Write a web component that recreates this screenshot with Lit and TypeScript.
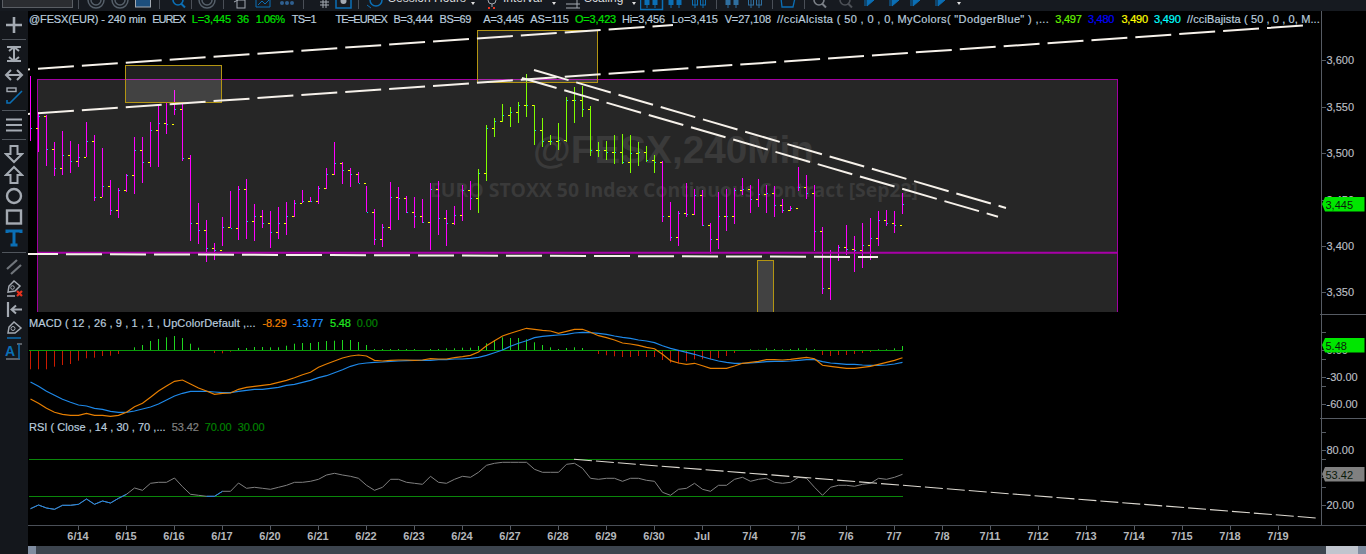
import { LitElement, html, css, svg } from "lit";
import { customElement } from "lit/decorators.js";

// [high, low, close] for each bar, 8px apart
const BARS: number[][] = [
  [76,141,128],[112,152,116],[115,166,149],[142,176,168],[131,175,155],[141,173,161],[144,167,157],[122,157,141],[135,201,197],[148,197,186],
  [180,215,210],[188,218,190],[174,192,175],[137,194,150],[137,183,162],[122,167,130],[106,167,123],[102,134,124],[90,115,109],[104,161,158],
  [155,241,223],[203,244,230],[220,262,248],[243,260,250],[217,246,227],[191,228,228],[186,240,189],[179,239,221],[204,241,216],[210,228,223],
  [211,248,232],[207,239,223],[202,235,216],[200,217,203],[190,203,201],[197,202,201],[186,204,188],[168,189,174],[142,175,163],[162,184,170],
  [168,187,174],[172,183,183],[186,212,212],[209,245,239],[224,247,227],[182,230,197],[187,220,198],[196,213,212],[197,228,216],[199,223,222],
  [183,250,189],[181,235,218],[210,246,223],[206,225,215],[185,221,190],[181,210,198],[169,213,173],[125,181,128],[118,137,121],[104,122,115],
  [107,127,112],[102,123,105],[74,117,105],[105,145,130],[118,147,141],[135,145,141],[123,150,140],[97,142,100],[87,123,100],[86,117,109],
  [106,156,150],[142,157,150],[141,160,152],[135,164,152],[134,164,162],[135,173,153],[142,166,152],[146,162,160],[155,173,162],[161,222,216],
  [202,241,237],[211,246,213],[183,217,214],[189,215,195],[190,226,225],[223,254,239],[192,249,216],[189,231,216],[188,224,190],[178,195,189],
  [185,213,199],[179,207,194],[185,213,193],[186,217,205],[199,213,210],[206,211,208],[167,191,187],[175,199,193],[185,251,231],[227,294,288],
  [250,300,252],[245,261,247],[225,255,249],[236,272,250],[223,268,245],[218,260,238],[211,246,220],[210,226,223],[211,233,225],[193,214,204],
];
const isGreen = (i: number) => i >= 56 && i <= 78;
const bx = (i: number) => 30 + 8 * i;

const path = (filter: (i: number) => boolean) =>
  BARS.map((b, i) => (filter(i) ? `M${bx(i) + 0.5} ${b[0]}V${b[1]}` : "")).join("");
const closeTicks = BARS.map((b, i) => `M${bx(i) + 1} ${b[2] + 0.5}h1`).join("");
const openTicks = BARS.map((b, i) => (i ? `M${bx(i) - 2} ${BARS[i - 1][2] + 0.5}h2` : "")).join("");

const HIST = [568,568,568,560,555,552,542,535,533,528,527,522,513,502,495,483,477,472,468,474,491,503,512,519,520,515,504,504,501,501,502,502,497,491,489,489,486,483,482,480,480,486,495,507,507,507,507,507,507,510,507,507,505,505,
  503,503,498,490,480,472,474,474,478,487,495,502,507,504,502,504,512,522,526,529,531,531,528,531,531,540,548,550,544,538,538,538,534,528,519,511,508,509,505,507,508,507,505,505,507,525,528,525,525,522,519,516,508,508,505,498];
const ORANGE = [
  ...[87,100,115,127,133,136,136,130,136,136,139,136,127,110,100,82,63,48,34,30,42,54,63,73,70,69,58,52,49,46,43,37,31,23,14,7].map((v) => 370 + v / 3),
  ...[562,552,543,534,528,525,528,541,543,541,540,540,541,540,536,537,537,533,
    530,526,516,497,482,468,460,452,445,448,451,453,460,454,448,448,457,467,473,480,489,492,496,502,506,523,542,549,553,550,557,565,565,565,558,550,547,544,539,539,540,538,535,532,536,556,559,562,565,565,562,559,553,547,541,533].map((v) => 180 + v / 3),
];
const BLUE = [
  ...[36,49,64,76,88,97,105,108,115,118,124,127,127,123,117,111,102,90,78,70,64,64,64,66,68,68,64,61,58,58,55,52,46,43,37,31,23,17,8,-1].map((v) => 370 + v / 3),
  ...[559,552,549,547,546,544,543,542,541,541,541,539,539,537,
    537,535,532,526,518,510,499,490,482,473,469,467,465,463,459,457,458,460,463,468,472,475,480,483,488,497,505,511,517,523,530,537,543,547,550,550,549,547,545,544,544,543,541,539,539,545,549,551,553,553,555,556,556,555,552,547].map((v) => 180 + v / 3),
];
const RSI = [416,405,414,418,406,406,403,387,403,393,399,385,373,354,361,340,337,337,324,350,373,376,379,379,364,364,339,355,352,355,358,352,346,337,337,334,328,315,310,315,319,325,346,361,352,328,328,337,340,343,319,337,340,328,
  319,322,307,286,280,277,277,277,277,298,307,307,307,283,280,295,325,328,325,325,334,325,325,331,334,367,376,358,355,340,358,364,346,346,328,322,334,328,325,337,340,337,322,325,352,376,352,346,346,349,343,340,325,328,322,313].map((v) => 370 + v / 3);

const pts = (a: number[], from = 0, to = a.length - 1) =>
  a.slice(from, to + 1).map((y, i) => `${bx(i + from) + 0.5},${y.toFixed(1)}`).join(" ");

const dash = (x1: number, y1: number, x2: number, y2: number, off: number) =>
  svg`<line class="trend" x1=${x1} y1=${y1} x2=${x2} y2=${y2} stroke-dashoffset=${off}></line>`;

const overlayRect = (x1: number, y1: number, x2: number, y2: number) =>
  svg`<rect class="box" x=${x1 + 0.5} y=${y1 + 0.5} width=${x2 - x1} height=${y2 - y1}></rect>`;

const axisLabel = (y: number, t: string) => svg`
  <path class="tick" d="M1322 ${y + 0.5}h4"></path>
  <text class="axis" x="1326.5" y=${y + 4}>${t}</text>`;

const badge = (y: number, t: string, fill: string) => svg`
  <polygon points="1322,${y + 7} 1325,${y} 1364.5,${y} 1364.5,${y + 14.5} 1325,${y + 14.5}" fill=${fill}></polygon>
  <text class="badge" x="1325.500" y=${y + 11.5}>${t}</text>`;

// x = left edge of the text, e = right edge of the text in the reference
type Item = { t: string; c?: string; x: number; e: number };
const MAIN_LEGEND: Item[] = [
  { t: "@FESX(EUR) - 240 min", x: 29, e: 146 },
  { t: "EUREX", x: 152.3, e: 185 },
  { t: "L=3,445", c: "#00e000", x: 191.7, e: 231 },
  { t: "36", c: "#00e000", x: 237, e: 249 },
  { t: "1.06%", c: "#00e000", x: 255.7, e: 284.7 },
  { t: "TS=1", x: 291.7, e: 316 },
  { t: "TE=EUREX", x: 335.5, e: 387 },
  { t: "B=3,444", x: 393.5, e: 433 },
  { t: "BS=69", x: 439.5, e: 471 },
  { t: "A=3,445", x: 483.3, e: 524 },
  { t: "AS=115", x: 530.3, e: 569 },
  { t: "O=3,423", c: "#00e000", x: 575, e: 616 },
  { t: "Hi=3,456", x: 622, e: 665 },
  { t: "Lo=3,415", x: 671.7, e: 718 },
  { t: "V=27,108", x: 724.7, e: 771 },
  { t: '//cciAlcista ( 50 , 0 , 0, MyColors( "DodgerBlue" ) ,...', x: 777, e: 1049.3 },
  { t: "3,497", c: "#66f000", x: 1055.3, e: 1081.7 },
  { t: "3,480", c: "#0000ff", x: 1088, e: 1114.3 },
  { t: "3,490", c: "#ffff00", x: 1121.5, e: 1148 },
  { t: "3,490", c: "#00ffff", x: 1154, e: 1180.7 },
  { t: "//cciBajista ( 50 , 0 , 0, M...", x: 1187, e: 1320 },
];
const MACD_LEGEND: Item[] = [
  { t: "MACD ( 12 , 26 , 9 , 1 , 1 , UpColorDefault ,...", x: 29.3, e: 256 },
  { t: "-8.29", c: "#f08000", x: 262.7, e: 287 },
  { t: "-13.77", c: "#1e90ff", x: 293, e: 323.7 },
  { t: "5.48", c: "#20e820", x: 330.3, e: 351 },
  { t: "0.00", c: "#008000", x: 357, e: 378 },
];
const RSI_LEGEND: Item[] = [
  { t: "RSI ( Close , 14 , 30 , 70 ,...", x: 29.3, e: 166 },
  { t: "53.42", c: "#808080", x: 172, e: 199 },
  { t: "70.00", c: "#008000", x: 205, e: 231.7 },
  { t: "30.00", c: "#008000", x: 238, e: 264.7 },
];

const measure = document.createElement("canvas").getContext("2d")!;
measure.font = `11px "Liberation Sans"`;

const legend = (items: Item[]) => html`<div class="legend">
  ${items.map((it, i) => {
    const next = i + 1 < items.length ? items[i + 1].x : it.e + 4;
    const ls = (it.e - it.x - measure.measureText(it.t).width) / it.t.length;
    return html`<span style="width:${(next - it.x).toFixed(1)}px;letter-spacing:${ls.toFixed(3)}px;${it.c ? `color:${it.c}` : ""}">${it.t}</span>`;
  })}
</div>`;

const DATES = ["6/14","6/15","6/16","6/17","6/20","6/21","6/22","6/23","6/24","6/27","6/28","6/29","6/30","Jul","7/4","7/5","7/6","7/7","7/8","7/11","7/12","7/13","7/14","7/15","7/18","7/19"];

const G = "#a4aab2";
const B = "#0b6fb5";
const ico = (w: number, h: number, body: unknown) =>
  html`<svg width=${w} height=${h} viewBox="0 0 ${w} ${h}" fill="none">${body}</svg>`;

const TOOLS: (unknown | null)[] = [
  svg`<path d="M10 2v16M2 10h16" stroke=${G} stroke-width="2.600"></path>`,
  null,
  svg`<path d="M3 3h14M3 17h14M10 4v12" stroke=${G} stroke-width="2"></path><path d="M5 7l5-4 5 4M5 13l5 4 5-4" stroke=${G} stroke-width="2"></path>`,
  svg`<path d="M3 10h14M7 5l-5 5 5 5M13 5l5 5-5 5" stroke=${G} stroke-width="2"></path>`,
  svg`<path d="M3 14l0 3 3 0L18 5" stroke=${B} stroke-width="1.600"></path><rect x="3" y="2" width="9" height="3.500" stroke=${G} stroke-width="1.400"></rect>`,
  null,
  svg`<path d="M2 4.500h16M2 10h16M2 15.500h16" stroke=${G} stroke-width="2"></path>`,
  null,
  svg`<path d="M6.500 2h7v8h4.500L10 18 2 10h4.500z" stroke=${G} stroke-width="2"></path>`,
  svg`<path d="M6.500 18h7v-8h4.500L10 2 2 10h4.500z" stroke=${G} stroke-width="2"></path>`,
  svg`<circle cx="10" cy="10" r="7" stroke=${G} stroke-width="2.400"></circle>`,
  svg`<rect x="3" y="3.500" width="14" height="13" stroke=${G} stroke-width="2.400"></rect>`,
  svg`<path d="M3 5V3h14v2M10 3v14M6.500 17h7" stroke=${B} stroke-width="3"></path>`,
  null,
  svg`<path d="M3 12L13 3M7 17L17 8" stroke="#70757b" stroke-width="2.200"></path>`,
  svg`<path d="M4 14l1-6 5-5 6 5-5 5zM3 18h8" stroke=${G} stroke-width="1.500"></path><circle cx="8.500" cy="9.500" r="1.800" stroke=${G}></circle><path d="M13 13l5 5M18 13l-5 5" stroke="#e8321e" stroke-width="2.200"></path>`,
  svg`<path d="M4 3v15" stroke=${G} stroke-width="2.200"></path><path d="M8 10.500h10M12 6.500l-4.500 4 4.500 4" stroke=${G} stroke-width="2"></path>`,
  svg`<path d="M4 13l1-6 5-5 7 6-6 5z" stroke=${G} stroke-width="1.500"></path><circle cx="9" cy="8.500" r="2" stroke=${G}></circle><path d="M3 18h14" stroke=${B} stroke-width="1.500"></path>`,
  svg`<text class="tool-a" x="1" y="15" fill=${B}>A</text><path d="M2 18h14M13 3h5" stroke=${G} stroke-width="1.200"></path><path d="M15 3v15" stroke=${B} stroke-width="1.500"></path>`,
];

const rings = svg`<circle cx="9" cy="0" r="8" stroke="#56606a" stroke-width="1.500"></circle><circle cx="9" cy="0" r="5" stroke="#56606a" stroke-width="1.500"></circle>`;
const sep = html`<i class="bar-sep"></i>`;
const caret = html`<span class="caret"></span>`;
const word = (t: string) => html`<span class="word">${t}</span>`;
const candles = (c: string) => svg`<path d="M5 0v8M13 0v8" stroke=${c}></path><rect x="2.500" y="0" width="5" height="5" fill=${c}></rect><rect x="10.500" y="0" width="5" height="5" fill=${c}></rect>`;
const hollow = (c: string) => svg`<path d="M5 0v8M13 0v8" stroke=${c}></path><rect x="2.500" y="-1" width="5" height="6" stroke=${c}></rect><rect x="10.500" y="-1" width="5" height="6" stroke=${c}></rect>`;
const lens = (c: string) => svg`<circle cx="7" cy="0" r="5" stroke=${c} stroke-width="1.600"></circle><path d="M10 3.500l4 4" stroke=${c} stroke-width="2"></path>`;
const skip = (c: string) => svg`<path d="M2 0v6M4 0l7 0-7 6z" fill=${c} stroke=${c}></path>`;
const draw = (body: unknown) => html`<svg width="30" height="11" viewBox="0 0 30 11" fill="none">${body}</svg>`;

// toolbar: [left edge, content]; each slot's width runs up to the next one
const TOP: [number, unknown][] = [
  [2, html`<div class="input"></div>`],
  [78, sep],
  [87, draw(rings)],
  [111, draw(rings)],
  [135, draw(svg`<rect x="0.500" y="-3" width="15" height="10" fill="#1d4f7d" stroke=${G}></rect>`)],
  [159, sep],
  [171, draw(lens(B))],
  [191, sep],
  [198, draw(rings)],
  [223, sep],
  [233, draw(svg`<rect x="4" y="0" width="8" height="8" stroke=${G}></rect><path d="M1 2l4-2" stroke=${G}></path>`)],
  [255, draw(svg`<path d="M1 7V0M15 7V0M1 7h14M3 5l4-4 3 3 4-4" stroke=${B}></path>`)],
  [279, draw(svg`<circle cx="3" cy="3" r="2" fill="#2f5f8f"></circle><circle cx="8" cy="3" r="2" fill="#2f5f8f"></circle><circle cx="13" cy="3" r="2" fill="#2f5f8f"></circle>`)],
  [303, sep],
  [314, draw(svg`<path d="M9 0v8M12 0v8M6 2h9M6 5h9" stroke=${G}></path>`)],
  [335, draw(svg`<rect x="1" y="-3" width="15" height="11" stroke=${B} stroke-width="1.500"></rect><circle cx="8.500" cy="1" r="3" fill=${G}></circle>`)],
  [358, sep],
  [366, draw(svg`<circle cx="10" cy="0" r="6" stroke=${B} stroke-width="1.500"></circle><path d="M1 5l4 3" stroke=${B}></path>`)],
  [388, word("Session Hours")],
  [471, caret],
  [486, draw(svg`<circle cx="6" cy="0" r="4" stroke=${G}></circle><path d="M2 8h2M7 8h2" stroke="#e8321e" stroke-width="2"></path><path d="M6 4v3" stroke=${G}></path>`)],
  [503, word("Interval")],
  [552, caret],
  [565, draw(svg`<path d="M1 4h14M1 8h14M12 0v8" stroke=${G}></path>`)],
  [584, word("Scaling")],
  [632, caret],
  [640, draw(svg`<rect x="0.500" y="-2" width="22" height="11.500" stroke=${B} stroke-width="1.500"></rect><g transform="translate(2 0)">${candles(B)}</g>`)],
  [666, draw(candles(B))],
  [690, draw(hollow(B))],
  [716, sep],
  [723, draw(candles("#2f6f9f"))],
  [746, draw(hollow("#2f6f9f"))],
  [772, sep],
  [779, draw(svg`<path d="M2 -2h14l-2 9H3z" stroke=${B} stroke-width="1.300"></path>`)],
  [804, sep],
  [812, draw(lens("#7b8087"))],
  [838, draw(lens("#4c5056"))],
  [863, draw(skip(B))],
  [888, draw(skip(B))],
  [909, draw(skip(B))],
  [934, draw(skip(B))],
  [957, caret],
];

@customElement("app-root")
export class AppRoot extends LitElement {
  static styles = css`
    :host {
      display: grid;
      grid-template-columns: 28px 1fr;
      grid-template-rows: 11px 543px;
      width: 1366px;
      height: 554px;
      overflow: hidden;
      background: #000;
      font-family: "Liberation Sans", Arial, sans-serif;
    }
    .top {
      grid-column: 1 / 3;
      display: flex;
      align-items: flex-start;
      padding-left: 2px;
      background: #161a20;
      overflow: hidden;
      height: 11px;
    }
    .slot {
      display: block;
      flex: none;
      height: 11px;
      overflow: hidden;
    }
    .slot svg, .tool svg { display: block; }
    .input {
      width: 71px;
      height: 8px;
      background: #2b2d31;
      border: 1px solid #5a5e64;
      border-top: 0;
      box-sizing: border-box;
    }
    .bar-sep {
      display: block;
      width: 1px;
      height: 9px;
      background: #4a4f57;
    }
    .word {
      display: block;
      margin-top: -9px;
      font-size: 12px;
      line-height: 14px;
      color: #d7d9dc;
      white-space: nowrap;
    }
    .caret {
      display: block;
      width: 0;
      height: 0;
      margin-top: 2px;
      border-left: 2.500px solid transparent;
      border-right: 2.500px solid transparent;
      border-top: 3px solid #e0e0e0;
    }
    .side {
      background: #14171c;
      display: flex;
      flex-direction: column;
      align-items: center;
      padding-top: 3px;
    }
    .tool {
      height: 21px;
      width: 20px;
      flex: none;
      display: flex;
      align-items: center;
      justify-content: center;
    }
    .tool-a { font: bold 14px "Liberation Sans", Arial, sans-serif; }
    .side-sep {
      height: 1px;
      width: 24px;
      flex: none;
      margin: 3.500px 0;
      background: #50555c;
    }
    .charts {
      display: flex;
      flex-direction: column;
      min-width: 0;
      background: #000;
    }
    .pane {
      position: relative;
      flex: none;
    }
    .pane-main { height: 304px; }
    .pane-macd { height: 104px; }
    .pane-rsi { height: 106px; }
    .pane svg { display: block; }
    .legend {
      position: absolute;
      left: 1px;
      top: 1px;
      display: flex;
      font-size: 11px;
      line-height: 14px;
      color: #b9cbdc;
      -webkit-text-stroke: 0.2px currentColor;
      white-space: pre;
    }
    .legend span { flex: none; }
    .trend {
      stroke: #f6f1ea;
      stroke-width: 2;
      stroke-dasharray: 36 8;
    }
    .trend.thin {
      stroke: #dcd8d0;
      stroke-width: 1.100;
      stroke-dasharray: 18 4;
    }
    .box {
      fill: rgba(255, 255, 255, 0.13);
      stroke: #b39512;
      stroke-width: 1;
    }
    .tick { stroke: #565b63; stroke-width: 1; fill: none; }
    .axis {
      font-size: 11px;
      fill: #bcbfc4;
      stroke: #bcbfc4;
      stroke-width: 0.15;
      font-family: "Liberation Sans", Arial, sans-serif;
    }
    .badge {
      font-size: 11px;
      fill: #0a1a0a;
      font-family: "Liberation Sans", Arial, sans-serif;
    }
    .wm1 {
      font: bold 38px "Liberation Sans", Arial, sans-serif;
      fill: #3a3a3a;
    }
    .wm2 {
      font: bold 20px "Open Sans", "Liberation Sans", sans-serif;
      fill: #3a3a3a;
    }
    .time {
      flex: none;
      height: 21px;
      box-sizing: border-box;
      border-top: 1px solid #4a4f57;
      display: flex;
      padding-left: 26px;
    }
    .date {
      width: 48px;
      flex: none;
      position: relative;
      text-align: center;
      font-size: 11px;
      font-weight: 700;
      line-height: 14px;
      padding-top: 3px;
      color: #b4b7bb;
    }
    .date::before {
      content: "";
      position: absolute;
      left: 24px;
      top: 0;
      width: 1px;
      height: 4px;
      background: #565b63;
    }
    .scroll {
      flex: none;
      height: 8px;
      display: flex;
      background: #3c444e;
    }
    .scroll .end { width: 8px; flex: none; background: #7f8ca0; }
    .scroll .fill { flex: 1; }
    .scroll .thumb { width: 32px; flex: none; background: #c0c5ce; }
  `;

  render() {
    return html`
      <div class="top">
        ${TOP.map(([x, body], i) => {
          const next = i + 1 < TOP.length ? TOP[i + 1][0] : x + 6;
          return html`<span class="slot" style="width:${next - x}px">${body}</span>`;
        })}
      </div>

      <div class="side">
        ${TOOLS.map((t) =>
          t === null
            ? html`<i class="side-sep"></i>`
            : html`<div class="tool">${ico(20, 20, t)}</div>`,
        )}
      </div>

      <div class="charts">
        <div class="pane pane-main">
          <svg width="1338" height="304" viewBox="28 11 1338 304">
            <rect x="37.500" y="79.500" width="1080" height="234" fill="#262626" stroke="#a000a0" stroke-width="1"></rect>
            <text class="wm1" x="533" y="163" textLength="281" lengthAdjust="spacingAndGlyphs">@FESX,240Min</text>
            <text class="wm2" x="430" y="197" textLength="488" lengthAdjust="spacingAndGlyphs">EURO STOXX 50 Index Continuous Contract [Sep22]</text>
            <path d=${path((i) => !isGreen(i))} stroke="#ff00ff" stroke-width="1" fill="none"></path>
            <path d=${path(isGreen)} stroke="#80ff00" stroke-width="1" fill="none"></path>
            <path d=${openTicks} stroke="#ffff00" stroke-width="1" fill="none"></path>
            <path d=${closeTicks} stroke="#00d8f0" stroke-width="1" fill="none"></path>
            <path d="M37 252.700H1117.500" stroke="#a800a8" stroke-width="2"></path>
            ${overlayRect(125, 65, 221, 102)}
            ${overlayRect(477, 30, 597, 82)}
            ${overlayRect(757, 260, 773, 320)}
            ${dash(28, 69.5, 673, 25, 34)}
            ${dash(28, 114, 1303, 25.5, 34)}
            ${dash(28, 254, 878, 257, 6)}
            ${dash(534, 70, 1006, 208, 0)}
            ${dash(522, 78, 998, 216.7, 0)}
            <rect x="28" y="312" width="1292" height="3" fill="#000"></rect>
            <path class="tick" d="M1321.500 11V315M1320 314.500h46"></path>
            ${axisLabel(60, "3,600")}
            ${axisLabel(107, "3,550")}
            ${axisLabel(153, "3,500")}
            ${axisLabel(200, "3,450")}
            ${axisLabel(246, "3,400")}
            ${axisLabel(292, "3,350")}
            ${badge(197, "3,445", "#00e600")}
          </svg>
          ${legend(MAIN_LEGEND)}
        </div>

        <div class="pane pane-macd">
          <svg width="1338" height="104" viewBox="28 315 1338 104">
            ${HIST.map((h, i) => {
              const y = 180 + h / 3;
              return svg`<path d="M${bx(i) + 0.5} 350V${y.toFixed(1)}" stroke=${h <= 511 ? "#1fd51f" : "#cc1a00"} stroke-width="1"></path>`;
            })}
            <path d="M29 350.500H903" stroke="#0a9a0a" stroke-width="1"></path>
            <polyline points=${pts(BLUE)} fill="none" stroke="#1e88e8" stroke-width="1.200"></polyline>
            <polyline points=${pts(ORANGE)} fill="none" stroke="#e67e00" stroke-width="1.200"></polyline>
            <path class="tick" d="M1321.500 315V419M1320 418.500h46M1322 332.500h4M1322 359.500h4M1322 386.500h4"></path>
            ${axisLabel(350, "0.00")}
            ${axisLabel(377, "-30.00")}
            ${axisLabel(404, "-60.00")}
            ${badge(338, "5.48", "#00e600")}
          </svg>
          ${legend(MACD_LEGEND)}
        </div>

        <div class="pane pane-rsi">
          <svg width="1338" height="106" viewBox="28 419 1338 106">
            <path d="M29 459.500H903M29 496.500H903" stroke="#0a860a" stroke-width="1"></path>
            <polyline points=${pts(RSI)} fill="none" stroke="#808080" stroke-width="1"></polyline>
            <polyline points=${pts(RSI, 0, 12)} fill="none" stroke="#1e88e8" stroke-width="1"></polyline>
            <polyline points=${pts(RSI, 22, 24)} fill="none" stroke="#1e88e8" stroke-width="1"></polyline>
            <line class="trend thin" x1="574" y1="459.300" x2="1316" y2="518"></line>
            <path class="tick" d="M1321.500 419V525M1322 432.500h4M1322 459.500h4M1322 487.500h4"></path>
            ${axisLabel(450, "80.00")}
            ${axisLabel(477, "40.00")}
            ${axisLabel(505, "20.00")}
            ${badge(467, "53.42", "#808080")}
          </svg>
          ${legend(RSI_LEGEND)}
        </div>

        <div class="time">
          ${DATES.map((d) => html`<div class="date">${d}</div>`)}
        </div>
        <div class="scroll">
          <div class="end"></div>
          <div class="fill"></div>
          <div class="thumb"></div>
          <div class="end"></div>
        </div>
      </div>
    `;
  }
}
